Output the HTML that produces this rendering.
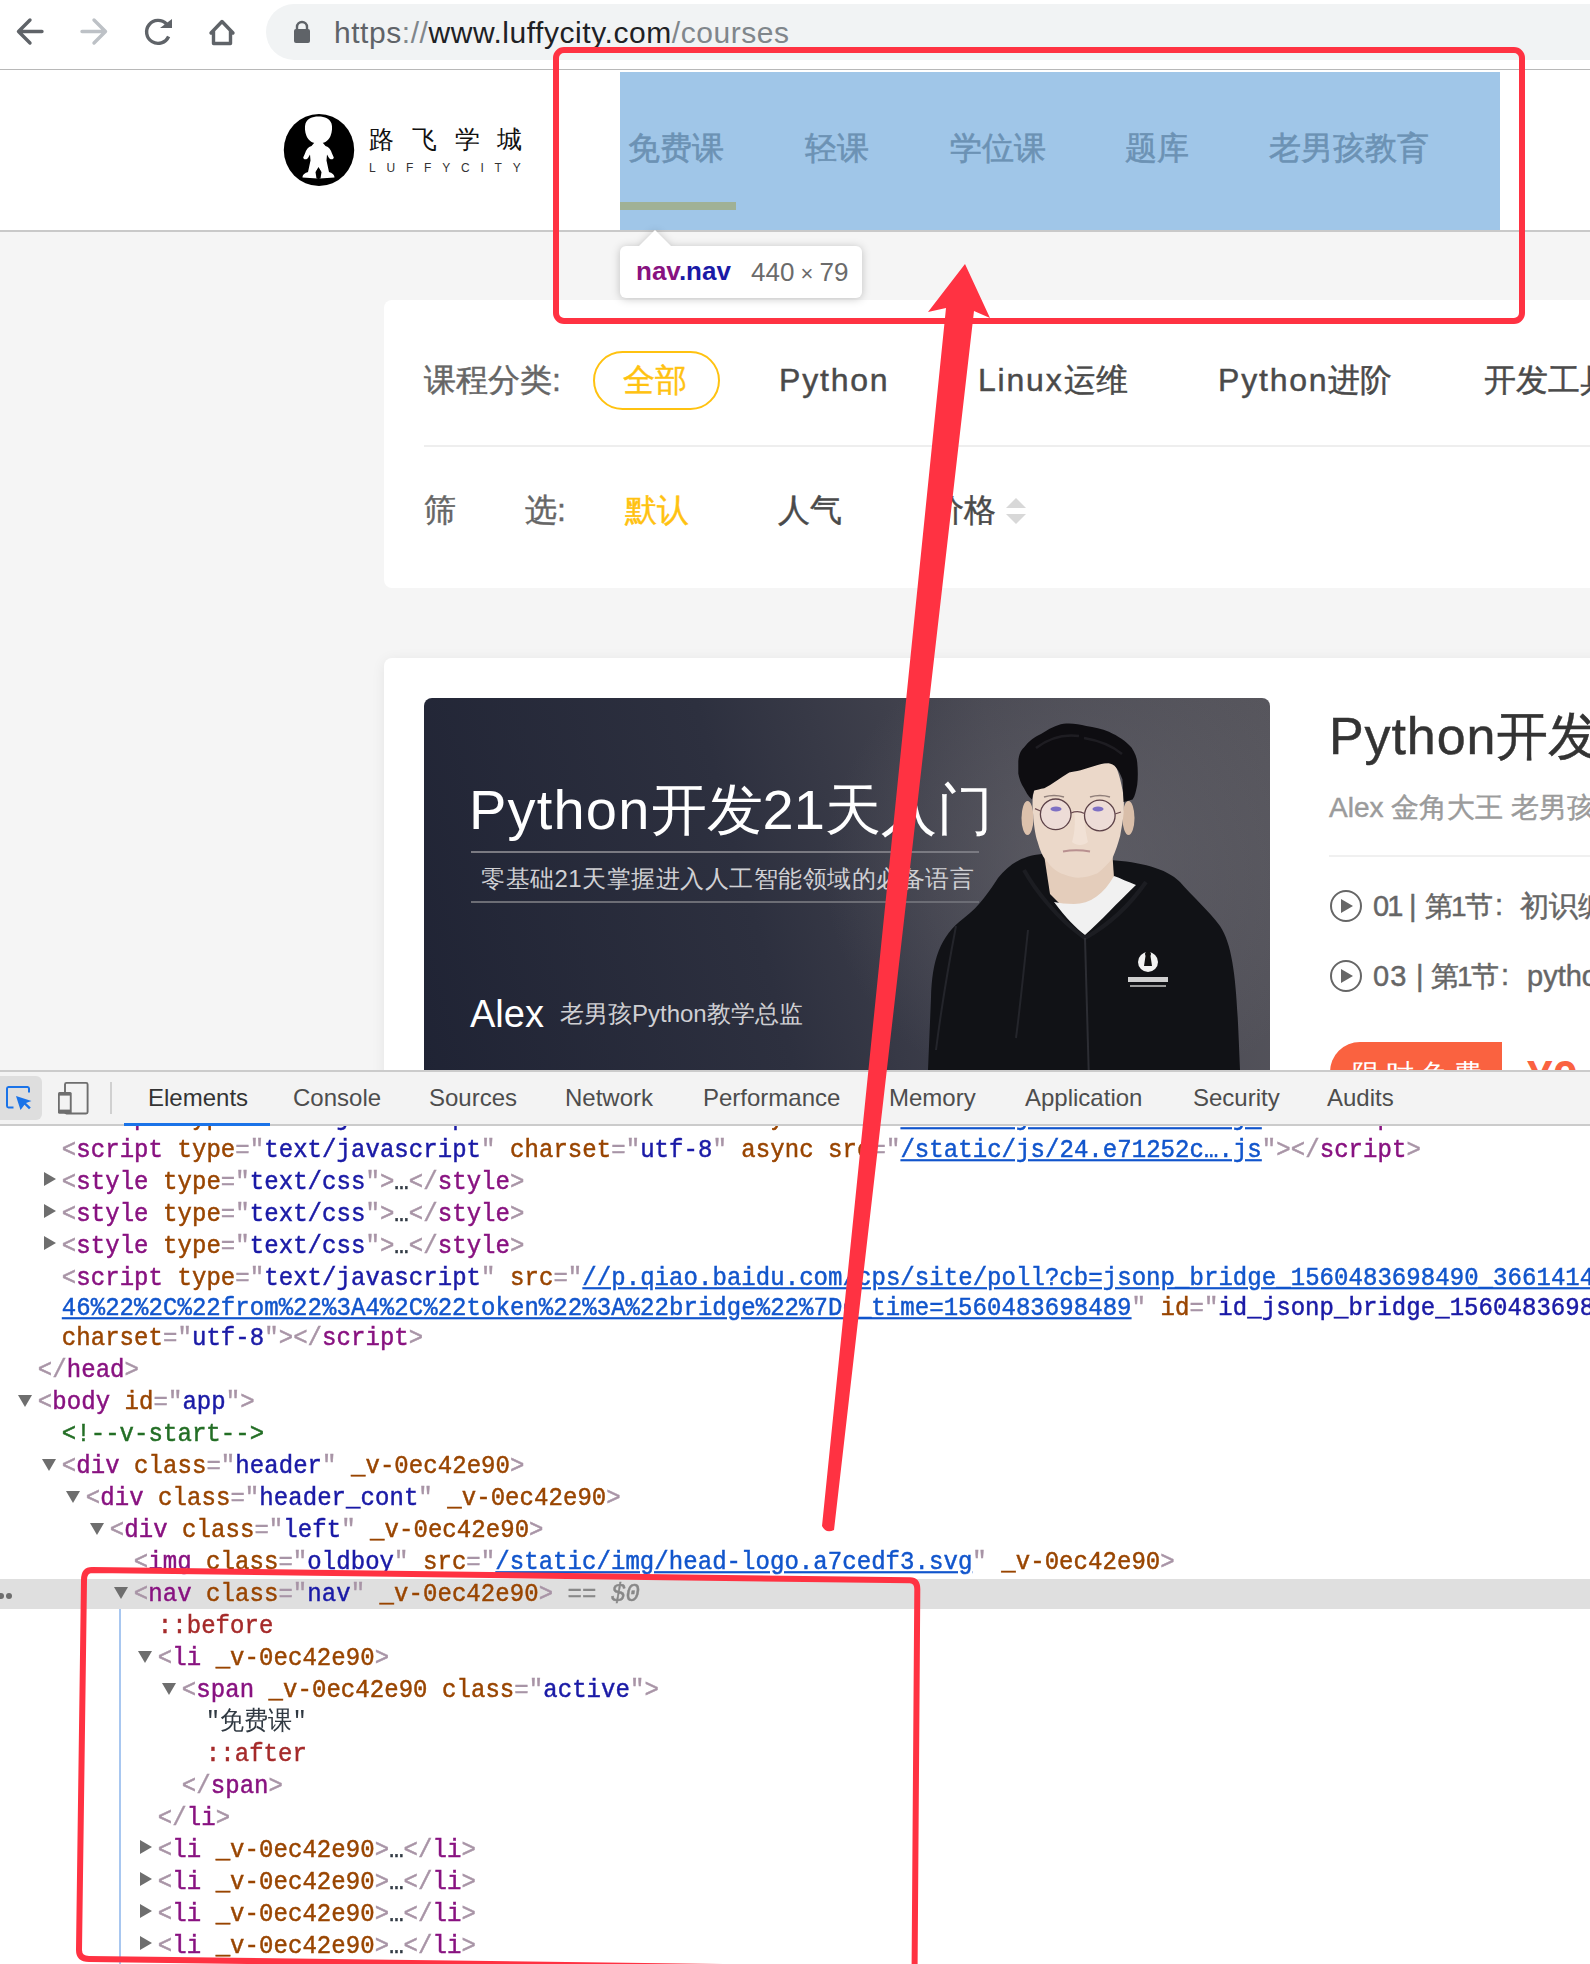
<!DOCTYPE html>
<html><head><meta charset="utf-8">
<style>
*{margin:0;padding:0;box-sizing:border-box}
html,body{width:1590px;height:1964px;overflow:hidden;background:#f5f5f5;font-family:"Liberation Sans",sans-serif;position:relative}
.a{position:absolute;white-space:nowrap;line-height:1}
svg{position:absolute;overflow:visible}
#toolbar{position:absolute;left:0;top:0;width:1590px;height:70px;background:#fff;border-bottom:1px solid #b8b8b8}
#pill{position:absolute;left:266px;top:4px;width:1400px;height:56px;border-radius:28px;background:#f1f3f4}
#url{left:334px;top:17.5px;font-size:30px;color:#202124;letter-spacing:0.55px}
#url .g{color:#5f6368}#url .g2{color:#80868b}
#header{position:absolute;left:0;top:70px;width:1590px;height:162px;background:#fff;border-bottom:2px solid #c9c9c9}
.nav{font-size:32px;color:#666;top:132px;-webkit-text-stroke:0.6px currentColor}
#overlay{position:absolute;left:620px;top:72px;width:880px;height:158px;background:rgba(111,168,220,0.66)}
#tip{position:absolute;left:620px;top:246px;width:242px;height:52px;background:#fff;border-radius:6px;box-shadow:0 1px 6px rgba(0,0,0,0.28)}
#tipar{position:absolute;left:639px;top:230px;width:0;height:0;border-left:16px solid transparent;border-right:16px solid transparent;border-bottom:16px solid #fff}
#card1{position:absolute;left:384px;top:300px;width:1300px;height:288px;background:#fff;border-radius:8px}
#card2{position:absolute;left:384px;top:658px;width:1300px;height:500px;background:#fff;border-radius:8px;box-shadow:0 2px 14px rgba(0,0,0,0.07)}
.f{font-size:32px;color:#4a4a4a}.r1{font-size:29px;color:#666}.sk,.f,.r1{-webkit-text-stroke:0.45px currentColor}.ls{letter-spacing:1.8px}
#img{position:absolute;left:424px;top:698px;width:846px;height:420px;border-radius:8px;overflow:hidden;background:linear-gradient(75deg,#1f2334 0%,#2d303f 40%,#484852 70%,#57565d 100%)}
#dev{position:absolute;left:0;top:1070px;width:1590px;height:894px;background:#fff;border-top:1px solid #cacaca}
#tabs{position:absolute;left:0;top:0;width:1590px;height:55px;background:#f3f3f3;border-bottom:1px solid #cccccc}
.tab{font-size:24px;color:#4d4d4d;top:14px}
.dom{position:absolute;font-family:"Liberation Mono",monospace;font-size:24px;white-space:pre;line-height:32px;height:32px;letter-spacing:0.054px;-webkit-text-stroke:0.45px currentColor;transform:scaleY(1.08);transform-origin:0 22px}
.t{color:#881280}.n{color:#994500}.v{color:#1a1aa6}.p{color:#a894a6}.l{color:#1155cc;text-decoration:underline}.c{color:#236e25}.ps{color:#a52a2a}.k{color:#303942}.g{color:#888}.i{color:#888;font-style:italic}
.tri{position:absolute;width:0;height:0}
.down{border-left:7px solid transparent;border-right:7px solid transparent;border-top:12px solid #6e6e6e}
.right{border-top:7px solid transparent;border-bottom:7px solid transparent;border-left:12px solid #6e6e6e}
</style></head><body>
<!-- browser toolbar -->
<div id="toolbar"><div id="pill"></div></div>
<svg width="1590" height="70" style="left:0;top:0">
 <g fill="none" stroke="#5f6368" stroke-width="3.4" stroke-linecap="round" stroke-linejoin="round">
  <path d="M42 31.5H19M30 20L18.5 31.5L30 43"/>
 </g>
 <g fill="none" stroke="#bdc1c6" stroke-width="3.4" stroke-linecap="round" stroke-linejoin="round">
  <path d="M82 31.5H105M94 20L105.5 31.5L94 43"/>
 </g>
 <path d="M168.6 36.5A11.5 11.5 0 1 1 166.5 24" fill="none" stroke="#5f6368" stroke-width="3.4"/>
 <path d="M160 28L172 28L172 19Z" fill="#5f6368"/>
 <path d="M211 33L222 21.5L233 33M213.5 31V43.5H230.5V31" fill="none" stroke="#5f6368" stroke-width="3.4" stroke-linejoin="round" stroke-linecap="round"/>
 <rect x="294" y="29" width="16" height="14" rx="2" fill="#5f6368"/>
 <path d="M297 30V27A5 5 0 0 1 307 27V30" fill="none" stroke="#5f6368" stroke-width="2.4"/>
</svg>
<div class="a" id="url"><span class="g">https</span><span class="g2">://</span>www.luffycity.com<span class="g2">/courses</span></div>

<!-- header -->
<div id="header"></div>
<svg width="80" height="80" style="left:279px;top:110px">
 <ellipse cx="40" cy="40" rx="35.2" ry="36" fill="#000"/>
 <g fill="#fff">
  <path d="M39.5 6.5C33 6.5 28 9 26.5 13.5C25.5 17 25.8 22 27.5 26C29.5 31 34 33.5 39.5 33.5C45 33.5 49.5 31 51.5 26C53.2 22 53.5 17 52.5 13.5C51 9 46 6.5 39.5 6.5Z"/>
  <path d="M35.5 32.5L32.5 36C29 37 27 40 26 43.5L24.2 47.5C24.5 49.8 27.8 50 29 48L31 44.5L31.5 50.5L30 57.5L29 62C26 63 23.5 64.5 23.5 67.5L38.5 68.5L37.5 60.5L39.5 57L41.5 60.5L40.5 68.5L55.5 67.5C55.5 64.5 53 63 50 62L49 57.5L47.5 50.5L48 44.5L50 48C51.2 50 54.5 49.8 54.8 47.5L53 43.5C52 40 50 37 46.5 36L43.5 32.5Z"/>
 </g>
 <path d="M36.5 62L37.5 68.5L41.5 68.5L42.5 62L39.5 58Z" fill="#000"/>
</svg>
<div class="a" style="left:369px;top:127px;font-size:25px;font-weight:300;color:#111;letter-spacing:17.8px">路飞学城</div>
<div class="a" style="left:369px;top:162px;font-size:12px;color:#333;letter-spacing:10.8px">LUFFYCITY</div>

<div class="a nav" style="left:628px">免费课</div>
<div class="a nav" style="left:805px">轻课</div>
<div class="a nav" style="left:950px">学位课</div>
<div class="a nav" style="left:1125px">题库</div>
<div class="a nav" style="left:1269px">老男孩教育</div>
<div style="position:absolute;left:620px;top:202px;width:116px;height:8px;background:#ffc210"></div>
<div id="overlay"></div>

<!-- filter card -->
<div id="card1"></div>
<div class="a sk" style="left:424px;top:364px;font-size:32px;color:#666">课程分类:</div>
<div style="position:absolute;left:593px;top:351px;width:127px;height:59px;border:2px solid #ffc210;border-radius:30px"></div>
<div class="a sk" style="left:623px;top:364px;font-size:32px;color:#ffc210">全部</div>
<div class="a f" style="left:779px;top:364px"><span class="ls">Python</span></div>
<div class="a f" style="left:978px;top:364px"><span class="ls">Linux</span>运维</div>
<div class="a f" style="left:1218px;top:364px"><span class="ls">Python</span>进阶</div>
<div class="a f" style="left:1484px;top:364px">开发工具</div>
<div style="position:absolute;left:424px;top:445px;width:1200px;height:2px;background:#eeeeee"></div>
<div class="a sk" style="left:424px;top:494px;font-size:32px;color:#666">筛</div>
<div class="a sk" style="left:525px;top:494px;font-size:32px;color:#666">选:</div>
<div class="a sk" style="left:625px;top:494px;font-size:32px;color:#ffc210">默认</div>
<div class="a f" style="left:778px;top:494px">人气</div>
<div class="a f" style="left:932px;top:494px">价格</div>
<div class="tri" style="left:1006px;top:498px;border-left:10px solid transparent;border-right:10px solid transparent;border-bottom:10px solid #d8d8d8"></div>
<div class="tri" style="left:1006px;top:514px;border-left:10px solid transparent;border-right:10px solid transparent;border-top:10px solid #d8d8d8"></div>

<!-- course card -->
<div id="card2"></div>
<div id="img">
 <svg width="846" height="420" style="left:0;top:0">
  <defs>
   <radialGradient id="glow" cx="0.5" cy="0.5" r="0.5"><stop offset="0" stop-color="#6a6970" stop-opacity="0.55"/><stop offset="1" stop-color="#6a6970" stop-opacity="0"/></radialGradient>
  </defs>
  <ellipse cx="660" cy="170" rx="260" ry="240" fill="url(#glow)"/>
  <!-- hoodie -->
  <path d="M504 372L507 300C508 262 516 238 540 220C556 208 566 192 574 180C584 168 596 158 618 156L686 162C716 164 742 170 756 184C768 198 784 212 796 228C812 252 813 300 816 372Z" fill="#111216"/>
  <!-- neck -->
  <path d="M619 150L688 150L690 180L662 232L626 196Z" fill="#e4cdbb"/>
  <!-- white shirt -->
  <path d="M630 204C642 220 652 230 661 237C676 224 694 204 712 187C704 184 696 180 690 178C680 196 666 206 650 206C642 206 636 205 630 204Z" fill="#f1f1f1"/>
  <!-- collar edges -->
  <path d="M600 172C610 190 632 220 661 240M722 184C708 204 690 224 661 240" fill="none" stroke="#1c1d22" stroke-width="4"/>
  <!-- ears -->
  <ellipse cx="603.5" cy="120" rx="6" ry="17" fill="#dcc1ac"/>
  <ellipse cx="704.5" cy="120" rx="6" ry="17" fill="#d9bea9"/>
  <!-- face -->
  <path d="M610 92.6C608 100 608.5 110 609 115C610 128 611 136 613.5 143.5C616 152 618 158 622.6 162.7C628 170 633 174 639.6 176.3C645 178.5 650 179.7 654.3 179.7C661 179.5 667 178 673.5 175.2C679 171 684 166 688.3 160.5C692 152 694 146 696.2 137.8C698 128 699 122 699.6 115C700 108 700 102 699.6 98.2C697 82 694 72 690.5 65.4C680 64 668 67 656.6 70C645 73 630 80 620.3 88Z" fill="#ebd8c9"/>
  <path d="M650 112C652 126 650 138 648 144C652 148 660 148 664 144C662 136 660 124 660 112Z" fill="#f4e6da" opacity="0.7"/>
  <!-- hair -->
  <path d="M594.3 63.1C595 56 597 52 600 49.5C605 43 610 39 617 36C625 31 632 27 639.6 25.8C647 25 655 26 662.2 28C670 29 678 31 684.9 33.7C694 38 702 43 707.5 49.5C711 55 713 60 713.2 64.3C714 72 714 80 713.2 86.9C712 93 711 98 708.6 101.6L699.6 103.9C699 95 699 88 698.4 81.2C696 75 694 71 690.5 67.7C687 65 683 65 679.2 65.4C672 67 664 70 656.6 72.2C652 73 648 74 645.2 74.4C636 80 628 86 620.3 90.3C616 91 613 92 610.1 92.6C609 96 608.5 99 607.9 101.6C604 98 602 94 600 90.3C597 86 595 80 594.3 75.6Z" fill="#0e0d11"/>
  <path d="M612 50C625 40 640 36 655 38M660 40C672 42 686 46 698 56" fill="none" stroke="#2a282e" stroke-width="2.5" opacity="0.6"/>
  <!-- glasses -->
  <circle cx="631.7" cy="116.3" r="15.3" fill="rgba(240,228,240,0.35)" stroke="#5d4248" stroke-width="1.3"/>
  <circle cx="675.8" cy="117.5" r="15.3" fill="rgba(240,228,240,0.35)" stroke="#5d4248" stroke-width="1.3"/>
  <path d="M647 115Q654 112 660.5 115.5M616.5 113L611 110.7M691 116L697 114" fill="none" stroke="#6a4a50" stroke-width="1.3"/>
  <!-- eyes brows mouth -->
  <ellipse cx="632" cy="111" rx="5.5" ry="2.4" fill="#7e70c4"/>
  <ellipse cx="674" cy="111" rx="5.5" ry="2.4" fill="#7e70c4"/>
  <path d="M620 99Q630 96 640 99M666 99Q676 96 686 99" fill="none" stroke="#6a5a58" stroke-width="1.6" opacity="0.7"/>
  <path d="M639 153.5Q652 151 666 153.5" fill="none" stroke="#b89090" stroke-width="2"/>
  <!-- zipper and drawstrings -->
  <path d="M661 240L666 420" stroke="#2c2d33" stroke-width="2"/>
  <path d="M532 228C524 270 516 320 512 352" fill="none" stroke="#24252b" stroke-width="2"/>
  <path d="M604 232C600 270 596 310 592 340" fill="none" stroke="#24252b" stroke-width="2"/>
  <!-- chest logo -->
  <circle cx="724" cy="264" r="10" fill="#f2f2f2"/>
  <path d="M721.5 258a3 3 0 1 1 5 0l1.5 10h-8z" fill="#111"/>
  <rect x="704" y="279" width="40" height="5" fill="#d0d0d0"/>
  <rect x="706" y="287" width="36" height="2" fill="#9a9a9a"/>
 </svg>
 <div class="a" style="left:45px;top:84px;font-size:56px;color:#fff;font-weight:300"><span style="letter-spacing:1.2px">Python</span>开发21天入门</div>
 <div style="position:absolute;left:47px;top:153px;width:508px;height:2px;background:#7a7a82"></div>
 <div class="a" style="left:57px;top:169px;font-size:24px;color:#d0d0d4;letter-spacing:0.5px">零基础21天掌握进入人工智能领域的必备语言</div>
 <div style="position:absolute;left:47px;top:203px;width:508px;height:2px;background:#6c6d75"></div>
 <div class="a" style="left:46px;top:297px;font-size:38px;color:#fff">Alex</div>
 <div class="a" style="left:136px;top:304px;font-size:24px;color:#cfcfd3">老男孩Python教学总监</div>
</div>
<div class="a sk" style="left:1329px;top:710px;font-size:52px;color:#333"><span style="letter-spacing:0.9px">Python</span>开发21天入门</div>
<div class="a sk" style="left:1329px;top:794px;font-size:28px;color:#9b9b9b">Alex 金角大王 老男孩Python教学总监</div>
<div style="position:absolute;left:1329px;top:855px;width:300px;height:2px;background:#f0f0f0"></div>
<svg width="40" height="40" style="left:1329px;top:889px"><circle cx="17" cy="17" r="15" fill="none" stroke="#666" stroke-width="2"/><path d="M12 10L24 17L12 24Z" fill="#666"/></svg>
<div class="a r1" style="left:1373px;top:892px;letter-spacing:-2px">01</div><div class="a r1" style="left:1409px;top:892px">|</div><div class="a r1" style="left:1425px;top:893px;font-size:28px;letter-spacing:-2px">第1节</div><div class="a r1" style="left:1495px;top:891px">:</div><div class="a r1" style="left:1520px;top:892px">初识编程</div>
<svg width="40" height="40" style="left:1329px;top:959px"><circle cx="17" cy="17" r="15" fill="none" stroke="#666" stroke-width="2"/><path d="M12 10L24 17L12 24Z" fill="#666"/></svg>
<div class="a r1" style="left:1373px;top:962px;letter-spacing:1px">03</div><div class="a r1" style="left:1416px;top:962px">|</div><div class="a r1" style="left:1431px;top:963px;font-size:28px;letter-spacing:-2px">第1节</div><div class="a r1" style="left:1501px;top:961px">:</div><div class="a r1" style="left:1527px;top:962px">python的安装</div>
<div style="position:absolute;left:1330px;top:1042px;width:172px;height:60px;background:#fa6240;border-radius:30px 0 0 0"></div>
<div class="a" style="left:1352px;top:1061px;font-size:28px;color:#fff;letter-spacing:6px">限时免费</div>
<div class="a" style="left:1527px;top:1054px;font-size:46px;color:#fa6240;font-weight:bold">¥0.00</div>

<!-- tooltip -->
<div style="position:absolute;left:0;top:0;filter:drop-shadow(0 1px 4px rgba(0,0,0,0.22))"><div id="tipar"></div><div id="tip" style="box-shadow:none"></div></div>
<div class="a" style="left:636px;top:258px;font-size:26px;font-weight:bold"><span style="color:#881280">nav</span><span style="color:#1a1aa6">.nav</span></div>
<div class="a" style="left:751px;top:259px;font-size:26px;color:#6b6b6b">440<span style="font-size:22px"> × </span>79</div>

<!-- devtools -->
<div id="dev"></div>
<div style="position:absolute;left:0;top:1579px;width:1590px;height:30px;background:#dfdfdf"></div>
<div style="position:absolute;left:119px;top:1609px;width:2px;height:360px;background:#a8c7f0"></div>
<div style="position:absolute;left:-2px;top:1593px;width:6px;height:6px;border-radius:3px;background:#6e6e6e"></div><div style="position:absolute;left:6px;top:1593px;width:6px;height:6px;border-radius:3px;background:#6e6e6e"></div>
<div class="dom" style="left:61.8px;top:1103.0px"><span class="p">&lt;</span><span class="t">script</span><span class="n"> type</span><span class="p">=&quot;</span><span class="v">text/javascript</span><span class="p">&quot;</span><span class="n"> charset</span><span class="p">=&quot;</span><span class="v">utf-8</span><span class="p">&quot;</span><span class="n"> async</span><span class="n"> src</span><span class="p">=&quot;</span><span class="l">/static/js/23.e71252c….js</span><span class="p">&quot;&gt;</span><span class="p">&lt;/</span><span class="t">script</span><span class="p">&gt;</span></div>
<div class="dom" style="left:61.8px;top:1135.0px"><span class="p">&lt;</span><span class="t">script</span><span class="n"> type</span><span class="p">=&quot;</span><span class="v">text/javascript</span><span class="p">&quot;</span><span class="n"> charset</span><span class="p">=&quot;</span><span class="v">utf-8</span><span class="p">&quot;</span><span class="n"> async</span><span class="n"> src</span><span class="p">=&quot;</span><span class="l">/static/js/24.e71252c….js</span><span class="p">&quot;&gt;</span><span class="p">&lt;/</span><span class="t">script</span><span class="p">&gt;</span></div>
<div class="dom" style="left:61.8px;top:1167.0px"><span class="p">&lt;</span><span class="t">style</span><span class="n"> type</span><span class="p">=&quot;</span><span class="v">text/css</span><span class="p">&quot;&gt;</span><span class="k">…</span><span class="p">&lt;/</span><span class="t">style</span><span class="p">&gt;</span></div>
<div class="tri right" style="left:44px;top:1172px"></div>
<div class="dom" style="left:61.8px;top:1199.0px"><span class="p">&lt;</span><span class="t">style</span><span class="n"> type</span><span class="p">=&quot;</span><span class="v">text/css</span><span class="p">&quot;&gt;</span><span class="k">…</span><span class="p">&lt;/</span><span class="t">style</span><span class="p">&gt;</span></div>
<div class="tri right" style="left:44px;top:1204px"></div>
<div class="dom" style="left:61.8px;top:1231.0px"><span class="p">&lt;</span><span class="t">style</span><span class="n"> type</span><span class="p">=&quot;</span><span class="v">text/css</span><span class="p">&quot;&gt;</span><span class="k">…</span><span class="p">&lt;/</span><span class="t">style</span><span class="p">&gt;</span></div>
<div class="tri right" style="left:44px;top:1236px"></div>
<div class="dom" style="left:61.8px;top:1263.0px"><span class="p">&lt;</span><span class="t">script</span><span class="n"> type</span><span class="p">=&quot;</span><span class="v">text/javascript</span><span class="p">&quot;</span><span class="n"> src</span><span class="p">=&quot;</span><span class="l">//p.qiao.baidu.com/cps/site/poll?cb=jsonp_bridge_1560483698490_3661414220</span></div>
<div class="dom" style="left:61.8px;top:1293.0px"><span class="l">46%22%2C%22from%22%3A4%2C%22token%22%3A%22bridge%22%7Dd_time=1560483698489</span><span class="p">&quot;</span><span class="n"> id</span><span class="p">=&quot;</span><span class="v">id_jsonp_bridge_1560483698490_36614</span></div>
<div class="dom" style="left:61.8px;top:1323.0px"><span class="n">charset</span><span class="p">=&quot;</span><span class="v">utf-8</span><span class="p">&quot;&gt;</span><span class="p">&lt;/</span><span class="t">script</span><span class="p">&gt;</span></div>
<div class="dom" style="left:37.8px;top:1355.0px"><span class="p">&lt;/</span><span class="t">head</span><span class="p">&gt;</span></div>
<div class="dom" style="left:37.8px;top:1387.0px"><span class="p">&lt;</span><span class="t">body</span><span class="n"> id</span><span class="p">=&quot;</span><span class="v">app</span><span class="p">&quot;&gt;</span></div>
<div class="tri down" style="left:18px;top:1395px"></div>
<div class="dom" style="left:61.8px;top:1419.0px"><span class="c">&lt;!--v-start--&gt;</span></div>
<div class="dom" style="left:61.8px;top:1451.0px"><span class="p">&lt;</span><span class="t">div</span><span class="n"> class</span><span class="p">=&quot;</span><span class="v">header</span><span class="p">&quot;</span><span class="n"> _v-0ec42e90</span><span class="p">&gt;</span></div>
<div class="tri down" style="left:42px;top:1459px"></div>
<div class="dom" style="left:85.8px;top:1483.0px"><span class="p">&lt;</span><span class="t">div</span><span class="n"> class</span><span class="p">=&quot;</span><span class="v">header_cont</span><span class="p">&quot;</span><span class="n"> _v-0ec42e90</span><span class="p">&gt;</span></div>
<div class="tri down" style="left:66px;top:1491px"></div>
<div class="dom" style="left:109.8px;top:1515.0px"><span class="p">&lt;</span><span class="t">div</span><span class="n"> class</span><span class="p">=&quot;</span><span class="v">left</span><span class="p">&quot;</span><span class="n"> _v-0ec42e90</span><span class="p">&gt;</span></div>
<div class="tri down" style="left:90px;top:1523px"></div>
<div class="dom" style="left:133.8px;top:1547.0px"><span class="p">&lt;</span><span class="t">img</span><span class="n"> class</span><span class="p">=&quot;</span><span class="v">oldboy</span><span class="p">&quot;</span><span class="n"> src</span><span class="p">=&quot;</span><span class="l">/static/img/head-logo.a7cedf3.svg</span><span class="p">&quot;</span><span class="n"> _v-0ec42e90</span><span class="p">&gt;</span></div>
<div class="dom" style="left:133.8px;top:1579.0px"><span class="p">&lt;</span><span class="t">nav</span><span class="n"> class</span><span class="p">=&quot;</span><span class="v">nav</span><span class="p">&quot;</span><span class="n"> _v-0ec42e90</span><span class="p">&gt;</span><span class="g"> == </span><span class="i">$0</span></div>
<div class="tri down" style="left:114px;top:1587px"></div>
<div class="dom" style="left:157.8px;top:1611.0px"><span class="ps">::before</span></div>
<div class="dom" style="left:157.8px;top:1643.0px"><span class="p">&lt;</span><span class="t">li</span><span class="n"> _v-0ec42e90</span><span class="p">&gt;</span></div>
<div class="tri down" style="left:138px;top:1651px"></div>
<div class="dom" style="left:181.8px;top:1675.0px"><span class="p">&lt;</span><span class="t">span</span><span class="n"> _v-0ec42e90</span><span class="n"> class</span><span class="p">=&quot;</span><span class="v">active</span><span class="p">&quot;&gt;</span></div>
<div class="tri down" style="left:162px;top:1683px"></div>
<div class="dom" style="left:205.8px;top:1707.0px"><span class="k" style="-webkit-text-stroke:0">&quot;免费课&quot;</span></div>
<div class="dom" style="left:205.8px;top:1739.0px"><span class="ps">::after</span></div>
<div class="dom" style="left:181.8px;top:1771.0px"><span class="p">&lt;/</span><span class="t">span</span><span class="p">&gt;</span></div>
<div class="dom" style="left:157.8px;top:1803.0px"><span class="p">&lt;/</span><span class="t">li</span><span class="p">&gt;</span></div>
<div class="dom" style="left:157.8px;top:1835.0px"><span class="p">&lt;</span><span class="t">li</span><span class="n"> _v-0ec42e90</span><span class="p">&gt;</span><span class="k">…</span><span class="p">&lt;/</span><span class="t">li</span><span class="p">&gt;</span></div>
<div class="tri right" style="left:140px;top:1840px"></div>
<div class="dom" style="left:157.8px;top:1867.0px"><span class="p">&lt;</span><span class="t">li</span><span class="n"> _v-0ec42e90</span><span class="p">&gt;</span><span class="k">…</span><span class="p">&lt;/</span><span class="t">li</span><span class="p">&gt;</span></div>
<div class="tri right" style="left:140px;top:1872px"></div>
<div class="dom" style="left:157.8px;top:1899.0px"><span class="p">&lt;</span><span class="t">li</span><span class="n"> _v-0ec42e90</span><span class="p">&gt;</span><span class="k">…</span><span class="p">&lt;/</span><span class="t">li</span><span class="p">&gt;</span></div>
<div class="tri right" style="left:140px;top:1904px"></div>
<div class="dom" style="left:157.8px;top:1931.0px"><span class="p">&lt;</span><span class="t">li</span><span class="n"> _v-0ec42e90</span><span class="p">&gt;</span><span class="k">…</span><span class="p">&lt;/</span><span class="t">li</span><span class="p">&gt;</span></div>
<div class="tri right" style="left:140px;top:1936px"></div>

<div id="tabsbar" style="position:absolute;left:0;top:1070px;width:1590px;height:56px;background:#f3f3f3;border-top:2px solid #cbcbcb;border-bottom:2px solid #cbcbcb">
 <div style="position:absolute;left:0;top:4px;width:42px;height:44px;background:#dedede;border-radius:0 6px 6px 0"></div>
 <svg width="40" height="40" style="left:0;top:8px">
  <path d="M13.5 27.5H8.5A1.6 1.6 0 0 1 7 26V8.5A1.6 1.6 0 0 1 8.5 7H27.5A1.6 1.6 0 0 1 29 8.5V12.5" fill="none" stroke="#1a73e8" stroke-width="2"/>
  <path d="M16 25L31.5 30L26 32L30.8 36.5L29 38.3L24.5 33.7L20.5 39Z" fill="#1a73e8" transform="translate(0,-9)"/>
 </svg>
 <svg width="40" height="40" style="left:56px;top:8px">
  <rect x="9" y="2.9" width="22.6" height="30.6" rx="1.5" fill="none" stroke="#6e6e6e" stroke-width="1.9"/>
  <rect x="2" y="12" width="13.7" height="21.7" rx="1.5" fill="#6e6e6e"/>
  <rect x="3.8" y="15.6" width="10" height="14" fill="#f3f3f3"/>
 </svg>
 <div style="position:absolute;left:110px;top:10px;width:2px;height:32px;background:#d0d0d0"></div>
 <div class="a tab" style="left:148px;color:#333">Elements</div>
 <div class="a tab" style="left:293px">Console</div>
 <div class="a tab" style="left:429px">Sources</div>
 <div class="a tab" style="left:565px">Network</div>
 <div class="a tab" style="left:703px">Performance</div>
 <div class="a tab" style="left:889px">Memory</div>
 <div class="a tab" style="left:1025px">Application</div>
 <div class="a tab" style="left:1193px">Security</div>
 <div class="a tab" style="left:1327px">Audits</div>
 <div style="position:absolute;left:124px;top:51px;width:146px;height:3px;background:#1a73e8"></div>
</div>
<svg width="1590" height="1964" style="left:0;top:0">
 <rect x="556" y="50" width="966" height="271" rx="8" fill="none" stroke="#ff3242" stroke-width="6"/>
 <path d="M965 264L928 312L946 308L822 1526Q826 1534 834 1530L974 311L990 318Z" fill="#ff3242"/>
 <path d="M92 1570Q84 1570 84 1580L79 1950Q79 1959 89 1959L1000 1970.5M914.5 1980L917.3 1589Q917.3 1580.5 910 1580.3L92 1570" fill="none" stroke="#ff3242" stroke-width="6" stroke-linejoin="round"/>
</svg>
</body></html>
